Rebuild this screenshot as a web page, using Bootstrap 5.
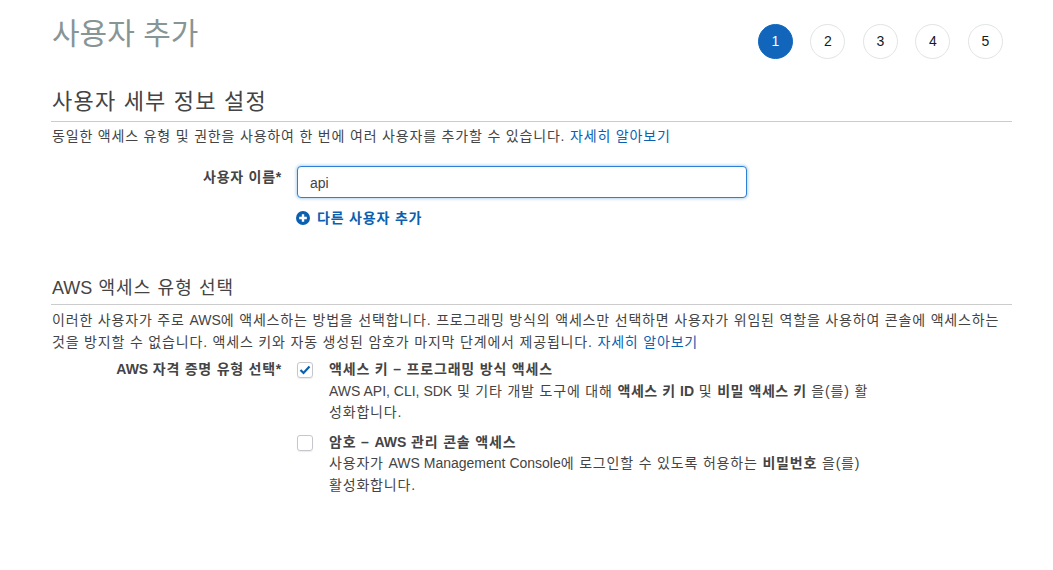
<!DOCTYPE html>
<html lang="ko">
<head>
<meta charset="utf-8">
<title>사용자 추가</title>
<link href="https://cdn.jsdelivr.net/npm/bootstrap@5.3.0/dist/css/bootstrap.min.css" rel="stylesheet">
<style>
html,body{height:570px;overflow:hidden;background:#fff}
body{font-family:"Liberation Sans","Noto Sans CJK KR",sans-serif;font-size:14px;line-height:21.5px;color:#444;letter-spacing:.82px}
.en{letter-spacing:0}
.pg{padding:0 41px 0 51px}
.ttl{height:87px;align-items:flex-start}
.ttl h1{font-size:30px;font-weight:400;color:#879596;line-height:36px;margin:16px 0 0 1px;letter-spacing:0}
.stp{gap:17.5px;margin:24px 9.2px 0 0;letter-spacing:0}
.stp span{width:35px;height:35px;border-radius:50%;border:1px solid #e1e4e5;color:#16191f;display:flex;align-items:center;justify-content:center;font-size:14px}
.stp span.on{background:#1166bb;border-color:#1166bb;color:#fff}
.sec{font-size:22px;font-weight:400;line-height:26px;color:#444;margin:0;padding:2px 0 6px 1px;border-bottom:1px solid #ccc;letter-spacing:1.2px}
.sec2{font-size:18px;letter-spacing:1.1px;margin-top:43px;padding:3px 0 3px 1px}
.dsc{margin:4px 0 0 1px}
.dsc2{margin-top:5px}
a.lnk{color:#0a5fb0;text-decoration:none}
.lab{width:231px;text-align:right;font-weight:700;color:#444;flex:none;letter-spacing:.75px}
.lab1{margin-top:1px}
.inp{width:450px;height:32px;margin-left:15px;padding:5px 12px 3px;font-size:14px;color:#444;border:1px solid #2e7fd6;border-radius:4px;box-shadow:0 0 3px 1px rgba(0,115,187,.3);font-family:inherit}
.row1{margin-top:18px}
.add{margin:10px 0 0 245px;color:#0a5fb0;font-weight:700;gap:7px}
.row2{margin-top:6px}
.opt{gap:16px}
.opt2{margin-top:8px}
.box{width:16px;height:16px;border:1px solid #c6c6cd;border-radius:3px;flex:none;margin:3px 0 0 15px;box-shadow:0 1px 1px rgba(0,0,0,.08);display:flex;align-items:center;justify-content:center}
.otx{width:545px}
.otx b{font-weight:700}
.otx b.tgt{letter-spacing:.55px}
</style>
</head>
<body>
<div class="pg">
  <div class="ttl d-flex justify-content-between">
    <h1>사용자 추가</h1>
    <div class="stp d-flex"><span class="on">1</span><span>2</span><span>3</span><span>4</span><span>5</span></div>
  </div>
  <h2 class="sec">사용자 세부 정보 설정</h2>
  <p class="dsc">동일한 액세스 유형 및 권한을 사용하여 한 번에 여러 사용자를 추가할 수 있습니다. <a class="lnk" href="#">자세히 알아보기</a></p>
  <div class="d-flex row1 align-items-start">
    <div class="lab lab1">사용자 이름*</div>
    <input class="inp en" type="text" value="api">
  </div>
  <div class="add d-flex align-items-center">
    <svg width="14" height="14" viewBox="0 0 14 14"><circle cx="7" cy="7" r="7" fill="#0a5fb0"/><path d="M7 3.2v7.6M3.2 7h7.6" stroke="#fff" stroke-width="2.4"/></svg>
    <span>다른 사용자 추가</span>
  </div>
  <h2 class="sec sec2"><span class="en">AWS</span> 액세스 유형 선택</h2>
  <p class="dsc dsc2 mb-0">이러한 사용자가 주로 <span class="en">AWS</span>에 액세스하는 방법을 선택합니다. 프로그래밍 방식의 액세스만 선택하면 사용자가 위임된 역할을 사용하여 콘솔에 액세스하는 것을 방지할 수 없습니다. 액세스 키와 자동 생성된 암호가 마지막 단계에서 제공됩니다. <a class="lnk" href="#">자세히 알아보기</a></p>
  <div class="d-flex row2">
    <div class="lab"><span class="en">AWS</span> 자격 증명 유형 선택*</div>
    <div>
      <div class="d-flex opt">
        <div class="box"><svg width="12" height="10" viewBox="0 0 12 10"><path d="M1.5 5l3 3 6-6.5" fill="none" stroke="#0a5fb0" stroke-width="2.2"/></svg></div>
        <div class="otx"><b>액세스 키 – 프로그래밍 방식 액세스</b><br><span class="en">AWS API, CLI, SDK</span> 및 기타 개발 도구에 대해 <b class="tgt">액세스 키 <span class="en">ID</span></b> 및 <b class="tgt">비밀 액세스 키</b> 을(를) 활성화합니다.</div>
      </div>
      <div class="d-flex opt opt2">
        <div class="box"></div>
        <div class="otx"><b>암호 – <span class="en">AWS</span> 관리 콘솔 액세스</b><br>사용자가 <span class="en">AWS Management Console</span>에 로그인할 수 있도록 허용하는 <b>비밀번호</b> 을(를) 활성화합니다.</div>
      </div>
    </div>
  </div>
</div>
</body>
</html>
